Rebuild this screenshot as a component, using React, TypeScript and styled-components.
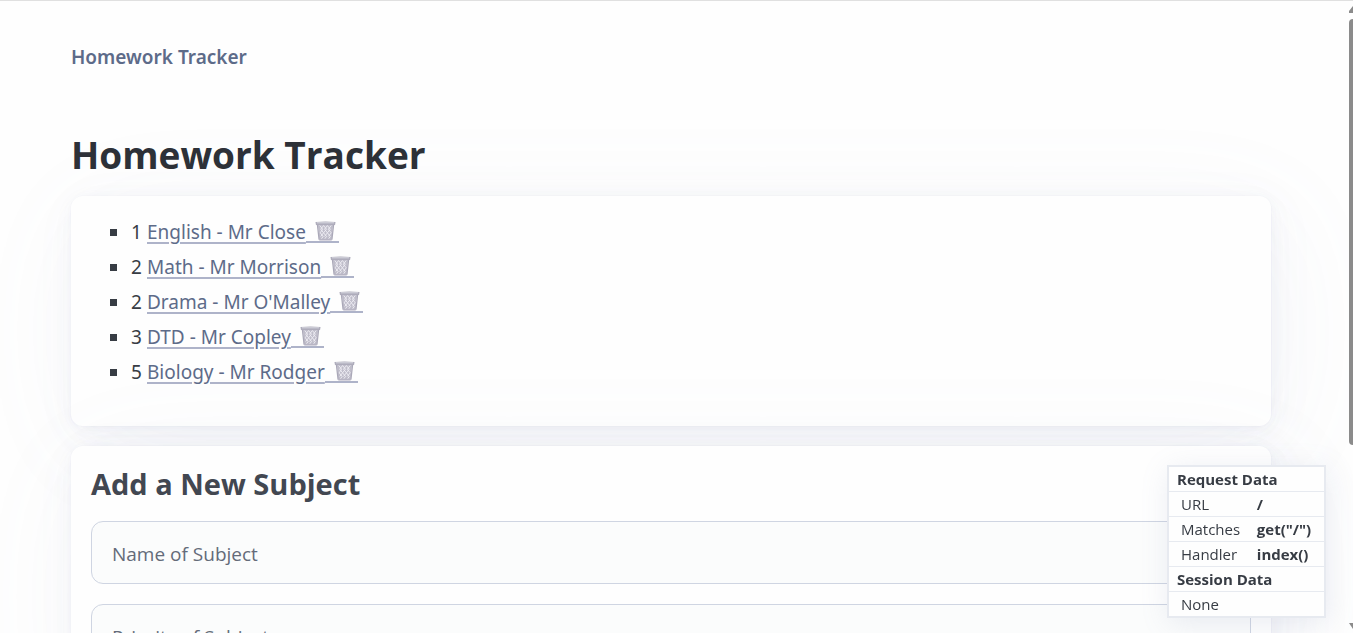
import React from "react";
import styled, { createGlobalStyle } from "styled-components";

const GlobalStyle = createGlobalStyle`
  *, *::before, *::after { box-sizing: border-box; }
  body {
    margin: 0;
    background: #fefefe;
    color: #373c44;
    font-family: "Segoe UI", "Open Sans", "Noto Sans", sans-serif;
    font-size: 19px;
    line-height: 30px;
  }
`;

const Page = styled.div`
  height: 100vh;
  overflow: hidden;
  border-top: 1px solid #e0e0e0;
  padding-right: 11px;
`;

const Container = styled.div`
  max-width: 1200px;
  margin: 0 auto;
`;

const Header = styled.header`
  padding: 41px 0;
  color: #5d6b89;
  font-family: "Segoe UI", "Noto Sans", sans-serif;
  font-weight: 600;
`;

const Title = styled.h1`
  margin: 16px 0 15px;
  color: #2d3138;
  font-size: 37px;
  line-height: 52px;
  font-weight: 700;
`;

const Card = styled.section`
  margin-bottom: 20px;
  padding: 20px;
  border-radius: 12px;
  background: #fefefe;
  box-shadow:
    0 1px 3px rgba(129, 145, 181, 0.017),
    1px 1px 8px rgba(129, 145, 181, 0.024),
    1px 3px 15px rgba(129, 145, 181, 0.03),
    2px 5px 27px rgba(129, 145, 181, 0.036),
    4px 8px 50px rgba(129, 145, 181, 0.043),
    10px 20px 120px rgba(129, 145, 181, 0.06),
    0 0 0 1px rgba(129, 145, 181, 0.015);
`;

const SubjectList = styled.ul`
  margin: 0;
  padding: 1px 0 14px;
  list-style: none;
`;

const SubjectItem = styled.li`
  display: flex;
  align-items: center;
  margin-bottom: 5px;
  padding-left: 40px;
  font-family: "Segoe UI", "Noto Sans", sans-serif;
  line-height: 30px;

  &::before {
    content: "";
    width: 7px;
    height: 7px;
    margin: 0 14px 0 -21px;
    background: #373c44;
  }
`;

const Priority = styled.span`
  width: 16px;
`;

const SubjectLink = styled.a`
  color: #5d6b89;
  text-decoration: underline;
  text-decoration-color: #aeb3c9;
  text-decoration-thickness: 2px;
  text-underline-offset: 3px;
`;

const DeleteLink = styled.a`
  display: flex;
  align-items: flex-end;
  align-self: flex-end;
  margin-bottom: 4px;
  padding: 0 3px 0 9px;
  border-bottom: 2px solid #aeb3c9;
`;

const FormTitle = styled.h2`
  margin: 0 0 20px;
  color: #424751;
  font-size: 29px;
  line-height: 35px;
  font-weight: 700;
`;

const TextField = styled.input`
  display: block;
  width: 100%;
  height: 63px;
  margin-bottom: 20px;
  padding: 2px 20px 0;
  border: 1px solid #cfd5e2;
  border-radius: 12px;
  background: #fbfcfc;
  color: #373c44;
  font: inherit;

  &::placeholder { color: #646b79; opacity: 1; }
`;

const DebugTable = styled.table`
  position: fixed;
  right: 27px;
  bottom: 15px;
  width: 159px;
  border: 2px solid #e7eaf0;
  border-collapse: collapse;
  background: #fefefe;
  box-shadow: 2px 5px 27px rgba(129, 145, 181, 0.16);
  font-size: 15px;
  line-height: 24px;

  tr { border-top: 1px solid #e7eaf0; }
  th, td { padding: 0; text-align: left; white-space: nowrap; }
  th { padding-left: 8px; font-weight: 700; }
  td:first-child { padding-left: 12px; }
  td + td { font-weight: 700; }
`;

const ScrollRail = styled.div`
  position: fixed;
  top: 0;
  right: 0;
  bottom: 0;
  width: 4px;
  display: flex;
  flex-direction: column;
  padding: 6px 0 0;
`;

const ScrollThumb = styled.div`
  flex: 0 0 68%;
  margin-top: 6px;
  border-radius: 4px 0 0 4px;
  background: #8b8b8b;
`;

const DownArrow = styled.svg`
  margin-top: auto;
`;

const subjects = [
  { priority: 1, name: "English - Mr Close" },
  { priority: 2, name: "Math - Mr Morrison" },
  { priority: 2, name: "Drama - Mr O'Malley" },
  { priority: 3, name: "DTD - Mr Copley" },
  { priority: 5, name: "Biology - Mr Rodger" },
];

function Wastebasket() {
  return (
    <svg width="21" height="20" viewBox="0 0 22 22" preserveAspectRatio="none" aria-hidden="true">
      <path d="M3 3h16l-1.500 18h-13z" fill="#bfbdca" />
      <path
        d="M5 5l3 4-2.500 4 3 4-2 3M9 5L6 9l3 4-3 4M9 5l3 4-3 4 3 4-2 3M13 5l-3 4 3 4-3 4M13 5l3 4-3 4 3 4-2 3M17 5l-3 4 3 4-3 4"
        fill="none"
        stroke="#efeef4"
        strokeWidth="1"
      />
      <path d="M2.500 4l1.800 16.500M19.500 4l-1.800 16.500" fill="none" stroke="#aaa8b8" strokeWidth="1.300" />
      <path d="M0.500 1Q11 0 21.500 1l-.5 3.500H1z" fill="#aeacbb" />
      <path d="M2 2h18" stroke="#dddbe4" />
      <path d="M4.500 20.500h13" stroke="#b8b5c4" strokeWidth="2" />
    </svg>
  );
}

export default function App() {
  return (
    <>
      <GlobalStyle />
      <Page>
        <Container>
          <Header>Homework Tracker</Header>
          <main>
            <Title>Homework Tracker</Title>
            <Card>
              <SubjectList>
                {subjects.map((s) => (
                  <SubjectItem key={s.name}>
                    <Priority>{s.priority}</Priority>
                    <SubjectLink href="#subject">{s.name}</SubjectLink>
                    <DeleteLink href="#delete" aria-label={`Delete ${s.name}`}>
                      <Wastebasket />
                    </DeleteLink>
                  </SubjectItem>
                ))}
              </SubjectList>
            </Card>
            <Card>
              <FormTitle>Add a New Subject</FormTitle>
              <form>
                <TextField aria-label="Name of Subject" placeholder="Name of Subject" />
                <TextField aria-label="Priority of Subject" placeholder="Priority of Subject" />
              </form>
            </Card>
          </main>
        </Container>
      </Page>
      <DebugTable>
        <tbody>
          <tr><th colSpan={2}>Request Data</th></tr>
          <tr><td>URL</td><td>/</td></tr>
          <tr><td>Matches</td><td>get("/")</td></tr>
          <tr><td>Handler</td><td>index()</td></tr>
          <tr><th colSpan={2}>Session Data</th></tr>
          <tr><td colSpan={2}>None</td></tr>
        </tbody>
      </DebugTable>
      <ScrollRail aria-hidden="true">
        <svg width="4" height="7" viewBox="0 0 4 7"><path d="M4 0v7H0V5z" fill="#8b8b8b" /></svg>
        <ScrollThumb />
        <DownArrow width="4" height="10" viewBox="0 0 4 10"><path d="M0 0h4v6z" fill="#8b8b8b" /></DownArrow>
      </ScrollRail>
    </>
  );
}
